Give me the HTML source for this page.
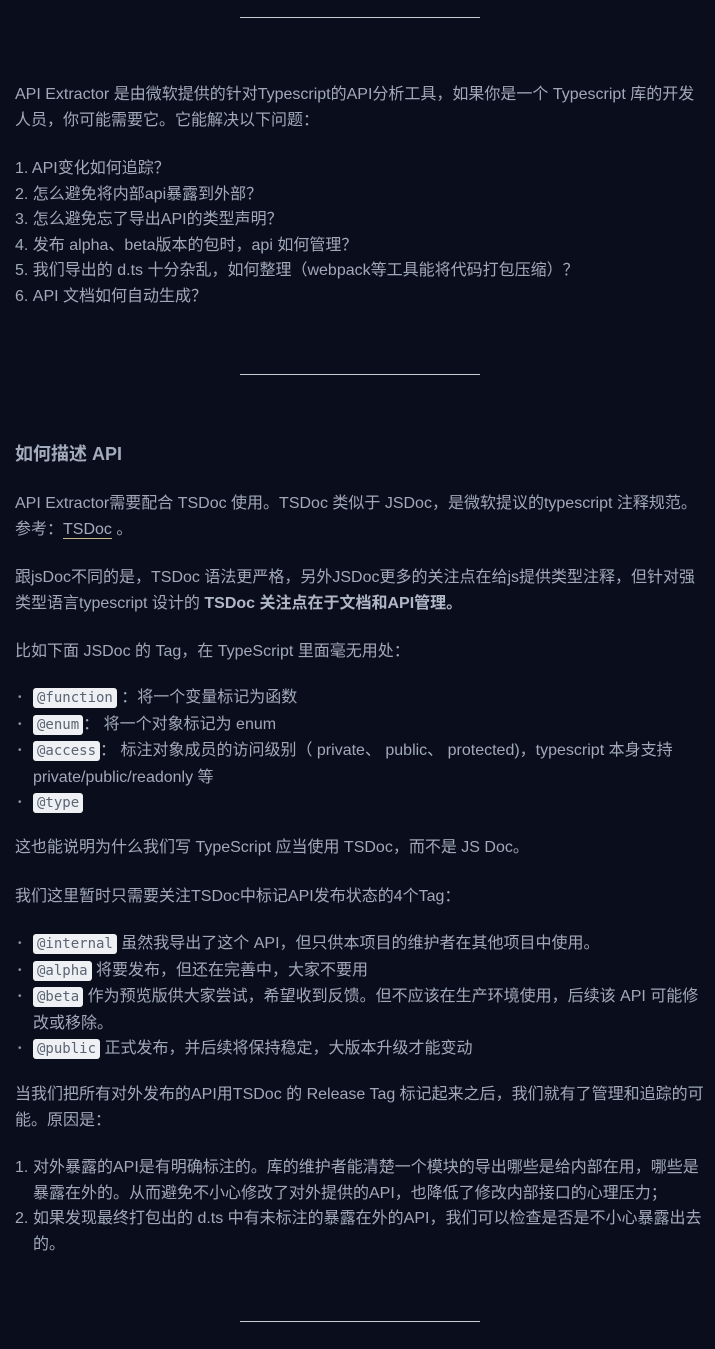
<!DOCTYPE html>
<html><head><meta charset="utf-8"><style>
html,body{margin:0;padding:0;background:#0a0e1c;width:715px;height:1349px;overflow:hidden}
body{position:relative;font-family:"Liberation Sans","Noto Sans CJK SC",sans-serif;font-size:16px;line-height:25.6px;color:#a0a8b9}
.b{position:absolute;left:15px;width:690px;margin:0}
.hr{position:absolute;left:240px;width:240px;height:1px;background:#c8ccd4}
h3{position:absolute;left:15px;margin:0;font-size:18px;font-weight:bold;color:#a3abbc;line-height:26px}
code{font-family:"DejaVu Sans Mono","Liberation Mono",monospace;font-size:14px;background:#eef0f3;color:#5b6474;border-radius:3px;padding:2px 4px}
b{color:#b0b7c6}
a{color:#a3abbc;text-decoration:none;border-bottom:1px solid #c9b98a}
.li{position:relative;padding-left:18px}
.li:before{content:"•";position:absolute;left:3px;font-size:10px;color:#8b93a3}
.ol{position:relative;padding-left:18px}
.ol span{position:absolute;left:0}
</style></head><body>
<div class="hr" style="top:17px"></div>
<p class="b" style="top:82px">API Extractor 是由微软提供的针对Typescript的API分析工具，如果你是一个 Typescript 库的开发人员，你可能需要它。它能解决以下问题：</p>
<div class="b" style="top:156px">1. API变化如何追踪？<br>2. 怎么避免将内部api暴露到外部？<br>3. 怎么避免忘了导出API的类型声明？<br>4. 发布 alpha、beta版本的包时，api 如何管理？<br>5. 我们导出的 d.ts 十分杂乱，如何整理（webpack等工具能将代码打包压缩）？<br>6. API 文档如何自动生成？</div>
<div class="hr" style="top:374px"></div>
<h3 style="top:441px">如何描述 API</h3>
<p class="b" style="top:491px">API Extractor需要配合 TSDoc 使用。TSDoc 类似于 JSDoc，是微软提议的typescript 注释规范。参考：<a>TSDoc</a> 。</p>
<p class="b" style="top:565px">跟jsDoc不同的是，TSDoc 语法更严格，另外JSDoc更多的关注点在给js提供类型注释，但针对强类型语言typescript 设计的 <b>TSDoc 关注点在于文档和API管理。</b></p>
<p class="b" style="top:639px">比如下面 JSDoc 的 Tag，在 TypeScript 里面毫无用处：</p>
<div class="b" style="top:685px">
<div class="li"><code>@function</code> ：将一个变量标记为函数</div>
<div class="li"><code>@enum</code>： 将一个对象标记为 enum</div>
<div class="li"><code>@access</code>： 标注对象成员的访问级别（ private、 public、 protected)，typescript 本身支持 private/public/readonly 等</div>
<div class="li"><code>@type</code></div>
</div>
<p class="b" style="top:835px">这也能说明为什么我们写 TypeScript 应当使用 TSDoc，而不是 JS Doc。</p>
<p class="b" style="top:884px">我们这里暂时只需要关注TSDoc中标记API发布状态的4个Tag：</p>
<div class="b" style="top:931px">
<div class="li"><code>@internal</code> 虽然我导出了这个 API，但只供本项目的维护者在其他项目中使用。</div>
<div class="li"><code>@alpha</code> 将要发布，但还在完善中，大家不要用</div>
<div class="li"><code>@beta</code> 作为预览版供大家尝试，希望收到反馈。但不应该在生产环境使用，后续该 API 可能修改或移除。</div>
<div class="li"><code>@public</code> 正式发布，并后续将保持稳定，大版本升级才能变动</div>
</div>
<p class="b" style="top:1082px">当我们把所有对外发布的API用TSDoc 的 Release Tag 标记起来之后，我们就有了管理和追踪的可能。原因是：</p>
<div class="b" style="top:1155px">
<div class="ol"><span>1.</span>对外暴露的API是有明确标注的。库的维护者能清楚一个模块的导出哪些是给内部在用，哪些是暴露在外的。从而避免不小心修改了对外提供的API，也降低了修改内部接口的心理压力；</div>
<div class="ol"><span>2.</span>如果发现最终打包出的 d.ts 中有未标注的暴露在外的API，我们可以检查是否是不小心暴露出去的。</div>
</div>
<div class="hr" style="top:1321px"></div>
</body></html>
